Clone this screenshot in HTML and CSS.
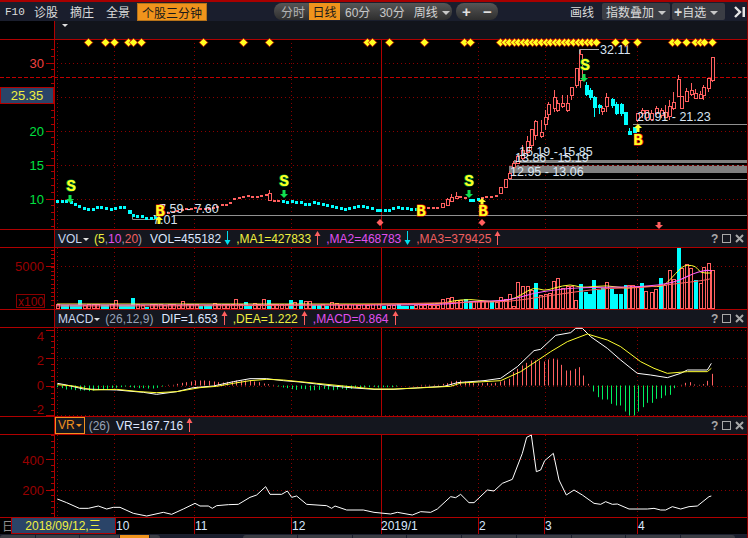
FILE: index.html
```html
<!DOCTYPE html>
<html>

<head>
    <meta charset="utf-8">
    <title>个股三分钟</title>
    <link rel="stylesheet" href="styles.css">
</head>

<body>
    <div class="app">
        <div class="topbar">
            <span class="nav-item f10">F10</span>
            <span class="nav-item">诊股</span>
            <span class="nav-item">摘庄</span>
            <span class="nav-item">全景</span>
            <span class="btn-orange">个股三分钟</span>
            <div class="pill periods">
                <span class="period">分时</span>
                <span class="period active">日线</span>
                <span class="period num">60分</span>
                <span class="period num">30分</span>
                <span class="period week">周线<i class="caret"></i></span>
            </div>
            <div class="pill zoom">
                <span>+</span>
                <span>−</span>
            </div>
            <span class="draw">画线</span>
            <span class="btn-grey index">指数叠加<i class="caret"></i></span>
            <span class="btn-grey fav"><b>+</b>自选<i class="caret"></i></span>
            <svg class="collapse" width="12" height="12" viewBox="0 0 12 12">
                <path d="M1 1 L6 6 L1 11" fill="none" stroke="#e4e4e4" stroke-width="2.4" />
                <rect x="8.5" y="1" width="2.5" height="10" fill="#e4e4e4" />
            </svg>
        </div>

        <div class="subbar">
            <div class="gutter"></div>
            <div class="subbar-body"><i class="caret light"></i></div>
        </div>

        <svg class="plot" id="mainChart" width="748" height="190" viewBox="0 39 748 190">
            <g id="mainBase"></g>
            <rect x="514" y="160" width="234" height="3" fill="#808080" />
            <rect x="509" y="165" width="239" height="8" fill="#808080" />
            <path d="M173 215.5H748 M509 179.5H748 M633 124.5H748 M132.5 215V219.5H155" fill="none" stroke="#909090" />
            <path d="M0 77.5H748" stroke="#c00000" stroke-dasharray="4 2" />
            <path d="M509 165.5H748" stroke="#700000" stroke-dasharray="3 2" />
            <g id="candles"></g>
            <path d="M579.5 54V49.5H599" fill="none" stroke="#b0b0b0" />
            <g class="range">
                <text x="600" y="54">32.11</text>
                <text x="637" y="121">20.91 - 21.23</text>
                <text x="519" y="156">15.19 - 15.85</text>
                <text x="515" y="162">13.86 - 15.19</text>
                <text x="510" y="176">12.95 - 13.06</text>
                <text x="159" y="213">7.59 - 7.60</text>
                <text x="153" y="224">7.01</text>
            </g>
            <g id="signals"></g>
            <g class="signal-s">
                <text x="71" y="191">S</text>
                <text x="284" y="186">S</text>
                <text x="469" y="186">S</text>
                <text x="585" y="70">S</text>
            </g>
            <g class="signal-b">
                <text x="160" y="216">B</text>
                <text x="421" y="216">B</text>
                <text x="483" y="216">B</text>
                <text x="638" y="145">B</text>
            </g>
            <g class="axis-text">
                <text class="up" x="44" y="68">30</text>
                <text class="down" x="44" y="136">20</text>
                <text class="down" x="44" y="170">15</text>
                <text class="down" x="44" y="204">10</text>
            </g>
            <rect class="price-box" x="0.5" y="87.5" width="53" height="16" />
            <text class="price-text" x="27" y="100">25.35</text>
        </svg>

        <div class="panel-head">
            <div class="gutter"></div>
            <div class="head-body">
                <span class="ind-name">VOL<i class="caret light"></i></span>
                <span class="params"><span class="c-yellow">(5</span>,<span class="c-magenta">10</span>,<span class="c-red">20</span>)</span>
                <span class="val">VOL=455182</span>
                <svg class="arrow" width="7" height="15"><path d="M3.5 0V10" stroke="#00e0f0" /><path d="M0.5 9H6.5L3.5 14Z" fill="#00e0f0" /></svg>
                <span class="c-yellow">,MA1=427833</span>
                <svg class="arrow" width="7" height="15"><path d="M3.5 14V4" stroke="#ff6060" /><path d="M0.5 5H6.5L3.5 0Z" fill="#ff6060" /></svg>
                <span class="c-magenta">,MA2=468783</span>
                <svg class="arrow" width="7" height="15"><path d="M3.5 0V10" stroke="#00e0f0" /><path d="M0.5 9H6.5L3.5 14Z" fill="#00e0f0" /></svg>
                <span class="c-red">,MA3=379425</span>
                <svg class="arrow" width="7" height="15"><path d="M3.5 14V4" stroke="#ff6060" /><path d="M0.5 5H6.5L3.5 0Z" fill="#ff6060" /></svg>
                <span class="win-btns"><b>?</b><i class="win-max"></i><svg width="9" height="9"><path d="M1 1L8 8M8 1L1 8" stroke="#a8a8a8" stroke-width="2" /></svg></span>
            </div>
        </div>

        <svg class="plot" id="volChart" width="748" height="61" viewBox="0 248 748 61">
            <g id="volBase"></g>
            <g id="volBars"></g>
            <g class="axis-text dim">
                <text x="44" y="271">5000</text>
            </g>
            <rect x="16.5" y="294.5" width="28" height="13" fill="#000" stroke="#8a0000" />
            <text class="unit" x="18" y="306">x100</text>
        </svg>

        <div class="panel-head">
            <div class="gutter"></div>
            <div class="head-body">
                <span class="ind-name">MACD<i class="caret light"></i></span>
                <span class="params">(26,12,9)</span>
                <span class="val">DIF=1.653</span>
                <svg class="arrow" width="7" height="15"><path d="M3.5 14V4" stroke="#ff6060" /><path d="M0.5 5H6.5L3.5 0Z" fill="#ff6060" /></svg>
                <span class="c-yellow">,DEA=1.222</span>
                <svg class="arrow" width="7" height="15"><path d="M3.5 14V4" stroke="#ff6060" /><path d="M0.5 5H6.5L3.5 0Z" fill="#ff6060" /></svg>
                <span class="c-magenta">,MACD=0.864</span>
                <svg class="arrow" width="7" height="15"><path d="M3.5 14V4" stroke="#ff6060" /><path d="M0.5 5H6.5L3.5 0Z" fill="#ff6060" /></svg>
                <span class="win-btns"><b>?</b><i class="win-max"></i><svg width="9" height="9"><path d="M1 1L8 8M8 1L1 8" stroke="#a8a8a8" stroke-width="2" /></svg></span>
            </div>
        </div>

        <svg class="plot" id="macdChart" width="748" height="88" viewBox="0 328 748 88">
            <g id="macdBase"></g>
            <g id="macdLines"></g>
            <g class="axis-text dim">
                <text x="44" y="341">4</text>
                <text x="44" y="365">2</text>
                <text x="44" y="390">0</text>
                <text x="44" y="414">-2</text>
            </g>
        </svg>

        <div class="panel-head">
            <div class="gutter"></div>
            <div class="head-body vr">
                <span class="ind-name selected">VR<i class="caret orange"></i></span>
                <span class="params">(26)</span>
                <span class="val">VR=167.716</span>
                <svg class="arrow" width="7" height="15"><path d="M3.5 14V4" stroke="#ff6060" /><path d="M0.5 5H6.5L3.5 0Z" fill="#ff6060" /></svg>
                <span class="win-btns"><b>?</b><i class="win-max"></i><svg width="9" height="9"><path d="M1 1L8 8M8 1L1 8" stroke="#a8a8a8" stroke-width="2" /></svg></span>
            </div>
        </div>

        <svg class="plot" id="vrChart" width="748" height="82" viewBox="0 435 748 82">
            <g id="vrBase"></g>
            <g id="vrLine"></g>
            <g class="axis-text dim">
                <text x="44" y="465">400</text>
                <text x="44" y="495">200</text>
            </g>
        </svg>

        <svg class="plot" id="timeAxis" width="748" height="17" viewBox="0 517 748 17">
            <path d="M0 517.5H748 M115.5 517V534 M194.5 517V534 M291.5 517V534 M381.5 517V534 M478.5 517V534 M544.5 517V534 M637.5 517V534" stroke="#b00000" />
            <g class="time-text">
                <text x="2" y="531" class="muted">日</text>
                <text x="116" y="530">10</text>
                <text x="195" y="530">11</text>
                <text x="292" y="530">12</text>
                <text x="381" y="530">2019/1</text>
                <text x="479" y="530">2</text>
                <text x="545" y="530">3</text>
                <text x="638" y="530">4</text>
            </g>
            <rect class="price-box" x="11.5" y="517.5" width="104" height="16" />
            <text class="price-text date" x="63" y="530">2018/09/12,三</text>
        </svg>

        <div class="bottom-strip">
            <div class="tabs left">
                <span class="tab w35"></span>
                <span class="tab w43"></span>
                <span class="tab w39"></span>
                <span class="tab w29 on"></span>
                <span class="tab"></span>
            </div>
            <div class="tabs right">
                <span class="tab"></span>
                <span class="tab"></span>
                <span class="tab"></span>
                <span class="tab"></span>
                <span class="tab"></span>
                <span class="tab"></span>
                <span class="tab"></span>
                <span class="tab"></span>
                <span class="tab"></span>
            </div>
        </div>
    </div>
    <script src="script.js"></script>
</body>

</html>
```

FILE: styles.css
```css
* {
    box-sizing: border-box;
}

html,
body {
    margin: 0;
    padding: 0;
    background-color: #000;
}

body {
    font-family: "Liberation Sans", "Noto Sans CJK SC", sans-serif;
    font-size: 12px;
}

.app {
    width: 748px;
    height: 538px;
    overflow: hidden;
    background-color: #000;
    border-right: 1px solid #900000;
}

.plot {
    display: block;
    overflow: visible;
}

.gutter {
    width: 54px;
    flex: none;
    background-color: #000;
}

/* top toolbar */
.topbar {
    height: 21px;
    display: flex;
    align-items: center;
    border-top: 2px solid #a80000;
    background-color: #1a1e2d;
    color: #dcdcdc;
    font-family: "Noto Sans CJK SC", sans-serif;
    font-size: 12px;
    padding-left: 5px;
}

.nav-item {
    margin-right: 13px;
    width: 23px;
    white-space: nowrap;
}

.nav-item.f10 {
    width: 16px;
    font-family: "Liberation Mono", monospace;
    font-size: 11px;
}

.btn-orange {
    width: 70px;
    height: 18px;
    margin-left: -5px;
    line-height: 17px;
    text-align: center;
    background-color: #f0941c;
    border: 1px solid #b5721a;
    color: #1a1a1a;
}

.pill {
    height: 17px;
    display: flex;
    align-items: center;
    border-radius: 8px;
    background: linear-gradient(#565656, #2e2e2e);
}

.periods {
    width: 178px;
    margin-left: 67px;
    padding-left: 7px;
    overflow: hidden;
    color: #b4b4b4;
}

.period {
    white-space: nowrap;
}

.period.active {
    width: 31px;
    height: 17px;
    margin-left: 4px;
    line-height: 17px;
    text-align: center;
    background-color: #f0941c;
    color: #1a1a1a;
}

.period.num {
    font-family: "Liberation Sans", "Noto Sans CJK SC", sans-serif;
    margin-left: 5px;
    margin-right: 4px;
    color: #c8c8c8;
}

.period.week {
    margin-left: 5px;
    color: #d4d4d4;
}

.caret {
    display: inline-block;
    width: 0;
    height: 0;
    margin-left: 4px;
    vertical-align: 2px;
    border-left: 4px solid transparent;
    border-right: 4px solid transparent;
    border-top: 4px solid #c8c8c8;
}

.caret.light {
    border-top-color: #e0e0e0;
    border-left-width: 3px;
    border-right-width: 3px;
    border-top-width: 3px;
}

.caret.orange {
    border-top-color: #f09020;
    border-left-width: 3px;
    border-right-width: 3px;
    border-top-width: 3px;
}

.zoom {
    width: 42px;
    margin-left: 4px;
    justify-content: space-around;
    color: #e0e0e0;
    font-family: "Liberation Sans", sans-serif;
    font-size: 15px;
    font-weight: bold;
}

.draw {
    margin-left: 72px;
    width: 32px;
}

.btn-grey {
    height: 17px;
    line-height: 17px;
    background-color: #3b3d44;
    white-space: nowrap;
    border-radius: 2px;
}

.btn-grey.index {
    width: 68px;
    padding-left: 4px;
}

.btn-grey.fav {
    width: 53px;
    margin-left: 2px;
    padding-left: 2px;
}

.btn-grey.fav b {
    font-family: "Liberation Sans", sans-serif;
    font-size: 14px;
}

.collapse {
    margin-left: 9px;
}

/* strip under the toolbar */
.subbar {
    height: 18px;
    display: flex;
}

.subbar-body {
    flex: 1;
    background-color: #12141b;
    border-left: 1px solid #b00000;
    padding-left: 3px;
    line-height: 9px;
}

/* indicator headers */
.panel-head {
    height: 19px;
    display: flex;
    border-top: 1px solid #b00000;
    border-bottom: 1px solid #b00000;
}

.head-body {
    flex: 1;
    display: flex;
    align-items: center;
    padding-left: 3px;
    border-left: 1px solid #b00000;
    background-color: #14161e;
    color: #dfe8ff;
    white-space: nowrap;
}

.head-body.vr {
    padding-left: 0;
}

.ind-name {
    color: #c8d8f0;
    margin-right: 5px;
}

.ind-name .caret {
    margin-left: 1px;
}

.ind-name.selected {
    height: 17px;
    line-height: 15px;
    padding: 0 2px 0 2px;
    margin-right: 4px;
    border: 1px solid #f09020;
    color: #f09020;
}

.params {
    color: #98a4b8;
    margin-right: 8px;
}

.vr .params {
    margin-right: 6px;
}

.arrow {
    margin: 0 5px 0 3px;
    flex: none;
}

.c-yellow {
    color: #f0f040;
}

.c-magenta {
    color: #e050f0;
}

.c-red {
    color: #f06060;
}

.win-btns {
    margin-left: auto;
    margin-right: 3px;
    display: flex;
    align-items: center;
    gap: 4px;
}

.win-btns b {
    color: #a8a8a8;
    font-size: 12px;
    width: 7px;
}

.win-max {
    display: block;
    width: 9px;
    height: 9px;
    border: 1px solid #a8a8a8;
}

/* svg text */
.axis-text text {
    font-size: 13px;
    text-anchor: end;
}

.axis-text .up {
    fill: #f04040;
}

.axis-text .down {
    fill: #00e040;
}

.axis-text.dim text {
    fill: #980000;
}

.unit {
    font-size: 12px;
    fill: #980000;
}

.range text {
    font-size: 12.5px;
    fill: #d8e4f0;
}

.signal-s text,
.signal-b text {
    font-family: "Liberation Mono", monospace;
    font-size: 16px;
    font-weight: bold;
    text-anchor: middle;
    fill: #ffff20;
    stroke-width: 1.2px;
    paint-order: stroke;
}

.signal-s text {
    stroke: #009a3c;
}

.signal-b text {
    stroke: #f01010;
}

.price-box {
    fill: #2a4468;
    stroke: #b00000;
}

.price-text {
    font-size: 13px;
    fill: #f0f040;
    text-anchor: middle;
}

.price-text.date {
    font-family: "Liberation Sans", "Noto Sans CJK SC", sans-serif;
    font-size: 12px;
}

.time-text text {
    font-size: 12px;
    fill: #d8e8ff;
}

.time-text .muted {
    font-family: "Noto Sans CJK SC", sans-serif;
    fill: #909090;
}

/* tabs at the window bottom */
.bottom-strip {
    height: 4px;
    display: flex;
    background-color: #1a1e2d;
    padding-top: 1px;
}

.tabs {
    display: flex;
    border-radius: 3px 3px 0 0;
    overflow: hidden;
    gap: 1px;
}

.tabs.left {
    width: 160px;
}

.tabs.right {
    width: 492px;
    margin-left: 83px;
}

.tab {
    flex: 1;
    background-color: #3b3d44;
}

.tab.w35 {
    flex: none;
    width: 35px;
}

.tab.w43 {
    flex: none;
    width: 43px;
}

.tab.w39 {
    flex: none;
    width: 39px;
}

.tab.w29 {
    flex: none;
    width: 29px;
}

.tab.on {
    background-color: #f0941c;
}
```

FILE: script.js
```js
var RED = "#ff6060";
var CYAN = "#00ffff";
var GRID = "#8a0000";
var LINE = "#b00000";
var gridX = [57, 114, 194, 291, 478, 545, 637];

function el(id) {
    return document.getElementById(id);
}

// draws gutter line, dotted grid and axis ticks for one panel
function base(id, top, bottom, rows, major, first, step) {
    var s = "";
    var i;
    for (i = 0; i < gridX.length; i++) {
        s += '<path d="M' + (gridX[i] + 0.5) + ' ' + top + 'V' + bottom + '" stroke="' + GRID + '" stroke-dasharray="1 3"/>';
    }
    for (i = 0; i < rows.length; i++) {
        s += '<path d="M57 ' + (rows[i] + 0.5) + 'H748" stroke="' + GRID + '" stroke-dasharray="1 3"/>';
    }
    s += '<path d="M381.5 ' + top + 'V' + bottom + '" stroke="' + LINE + '"/>';
    s += '<path d="M54.5 ' + top + 'V' + bottom + '" stroke="' + LINE + '"/>';
    for (var y = first; y < bottom; y += step) {
        var ty = Math.round(y) + 0.5;
        s += '<path d="M51 ' + ty + 'H54" stroke="' + LINE + '"/>';
    }
    for (i = 0; i < major.length; i++) {
        s += '<path d="M46 ' + (major[i] + 0.5) + 'H54" stroke="' + LINE + '"/>';
    }
    el(id).innerHTML = s;
}

function polyline(points, color, width) {
    var s = "";
    for (var i = 0; i < points.length; i++) {
        s += points[i][0] + "," + points[i][1] + " ";
    }
    return '<polyline points="' + s + '" fill="none" stroke="' + color + '" stroke-width="' + (width || 1) + '"/>';
}

// same points but rounded off through the midpoints
function curve(points, color, width) {
    var d = "M" + points[0][0] + " " + points[0][1];
    for (var i = 1; i < points.length - 1; i++) {
        var mx = (points[i][0] + points[i + 1][0]) / 2;
        var my = (points[i][1] + points[i + 1][1]) / 2;
        d += "Q" + points[i][0] + " " + points[i][1] + " " + mx + " " + my;
    }
    var last = points[points.length - 1];
    d += "L" + last[0] + " " + last[1];
    return '<path d="' + d + '" fill="none" stroke="' + color + '" stroke-width="' + (width || 1) + '"/>';
}

// turns zoomed-crop style values into page pixels
function fromCrop(list, x0, y0) {
    var out = [];
    for (var i = 0; i < list.length; i += 2) {
        out.push([x0 + list[i] / 3, y0 + list[i + 1] / 3]);
    }
    return out;
}

base("mainBase", 39, 229, [63, 97, 131, 165, 199], [63, 131, 165, 199], 49, 6.8);
el("mainBase").innerHTML += '<path d="M0 39.5H748" stroke="' + LINE + '"/>';
base("volBase", 248, 309, [266], [266], 250, 4.2);
base("macdBase", 328, 416, [330, 358, 386, 415], [330, 358, 386, 415], 330, 5.7);
base("vrBase", 435, 517, [459, 490], [459, 490], 435, 6);

// small candles: x, centre y, direction
var small = [
    [57, 201, 0], [62, 201, 0], [66, 201, 0], [71, 202, 0], [75, 204, 0], [79, 206, 0], [84, 208, 0], [88, 209, 0],
    [93, 209, 0], [97, 207, 0], [101, 207, 0], [106, 208, 0], [111, 209, 0], [115, 208, 0], [120, 207, 0], [124, 207, 0],
    [133, 215, 0], [137, 216, 0], [142, 216, 0], [146, 218, 0], [151, 218, 0], [155, 217, 0],
    [163, 212, 1], [168, 212, 1], [173, 211, 1], [177, 210, 1], [182, 209, 1], [186, 208, 1], [191, 208, 1], [195, 207, 1],
    [200, 208, 1], [205, 208, 1], [209, 208, 1], [213, 207, 1], [217, 206, 1], [222, 204, 1], [226, 204, 1], [230, 202, 1],
    [234, 198, 1], [239, 197, 1], [243, 196, 1], [248, 195, 1], [252, 196, 1], [257, 196, 1], [261, 195, 1], [266, 194, 1],
    [274, 200, 1], [278, 200, 1],
    [283, 201, 0], [287, 202, 0], [292, 201, 0], [296, 202, 0], [301, 202, 0], [305, 204, 0], [309, 204, 0], [314, 202, 0],
    [318, 203, 0], [323, 204, 0], [327, 205, 0], [332, 206, 0], [336, 207, 0], [341, 208, 0], [345, 209, 0], [349, 208, 0],
    [354, 207, 0], [358, 206, 0], [363, 206, 0], [367, 207, 0], [372, 208, 0],
    [377, 210, 0], [380, 210, 0], [385, 210, 0], [389, 210, 0], [393, 208, 0], [398, 207, 0], [402, 208, 0], [407, 208, 0],
    [411, 209, 0], [416, 209, 0],
    [419, 209, 1], [428, 207, 1], [433, 207, 1], [437, 207, 1], [460, 196, 1], [465, 197, 1],
    [470, 200, 0], [473, 200, 0], [478, 199, 0],
    [482, 197, 1], [486, 196, 1], [491, 196, 1], [496, 195, 1]
];

// bigger candles: x, body top, body bottom, wick top, wick bottom, direction
var big = [
    [128, 210, 214, 210, 214, 0],
    [269, 193, 200, 190, 200, 1],
    [442, 203, 207, 203, 207, 1],
    [447, 199, 205, 198, 206, 1],
    [451, 197, 201, 194, 202, 1],
    [456, 196, 198, 192, 199, 1],
    [500, 187, 193, 187, 193, 1],
    [505, 179, 187, 179, 187, 1],
    [509, 173, 178, 171, 178, 1],
    [513, 163, 167, 161, 169, 1],
    [517, 156, 163, 154, 164, 1],
    [522, 150, 158, 145, 160, 1],
    [527, 141, 152, 136, 156, 1],
    [531, 129, 145, 129, 150, 1],
    [535, 121, 135, 120, 140, 1],
    [541, 132, 136, 120, 138, 1],
    [545, 117, 124, 110, 130, 1],
    [548, 104, 114, 102, 120, 1],
    [554, 97, 108, 90, 112, 1],
    [557, 103, 110, 100, 112, 1],
    [562, 103, 106, 95, 108, 1],
    [567, 103, 110, 95, 112, 1],
    [571, 87, 95, 87, 100, 1],
    [576, 68, 85, 68, 88, 1],
    [580, 54, 80, 49, 88, 1],
    [585, 85, 95, 82, 96, 0],
    [589, 90, 98, 88, 100, 0],
    [593, 97, 108, 96, 117, 0],
    [598, 105, 108, 104, 114, 0],
    [602, 108, 111, 106, 115, 1],
    [606, 97, 106, 93, 112, 1],
    [611, 99, 106, 98, 108, 0],
    [615, 104, 114, 102, 115, 0],
    [620, 104, 114, 103, 116, 0],
    [624, 112, 125, 112, 125, 0],
    [628, 131, 135, 128, 135, 0],
    [633, 127, 133, 127, 133, 0],
    [637, 113, 120, 113, 122, 1],
    [642, 110, 113, 108, 118, 1],
    [646, 110, 117, 110, 121, 1],
    [651, 113, 119, 110, 121, 1],
    [656, 108, 113, 106, 115, 1],
    [661, 110, 115, 108, 118, 1],
    [665, 112, 117, 105, 118, 1],
    [669, 106, 116, 100, 120, 1],
    [673, 102, 108, 92, 110, 1],
    [678, 79, 96, 75, 97, 1],
    [681, 96, 108, 96, 108, 1],
    [686, 91, 101, 88, 102, 1],
    [691, 90, 94, 83, 96, 1],
    [695, 93, 98, 89, 99, 1],
    [700, 94, 98, 91, 99, 1],
    [703, 87, 95, 85, 100, 1],
    [708, 78, 88, 78, 92, 1],
    [712, 57, 80, 57, 82, 1]
];

var c = "";
var i;
for (i = 0; i < small.length; i++) {
    if (small[i][2]) {
        c += '<rect x="' + (small[i][0] - 1) + '" y="' + small[i][1] + '" width="3" height="2" fill="' + RED + '"/>';
    } else {
        c += '<rect x="' + (small[i][0] - 1) + '" y="' + (small[i][1] - 1) + '" width="3" height="3" fill="' + CYAN + '"/>';
    }
}
for (i = 0; i < big.length; i++) {
    var b = big[i];
    var color = b[5] ? RED : CYAN;
    if (b[5]) {
        c += '<path d="M' + (b[0] + 0.5) + ' ' + b[3] + 'V' + b[4] + '" stroke="' + color + '"/>';
        c += '<rect x="' + (b[0] - 0.5) + '" y="' + (b[1] + 0.5) + '" width="3" height="' + (b[2] - b[1]) + '" fill="#000" stroke="' + color + '"/>';
    } else {
        c += '<path d="M' + (b[0] + 1.5) + ' ' + b[3] + 'V' + b[4] + '" stroke="' + color + '"/>';
        c += '<rect x="' + b[0] + '" y="' + b[1] + '" width="4" height="' + (b[2] - b[1]) + '" fill="' + color + '"/>';
    }
}
el("candles").innerHTML = c;

// signals along the top edge and the markers
var topMarks = [88, 105, 114, 128, 133, 141, 203, 243, 269, 367, 372, 389, 424, 464, 470, 615, 625, 637, 672, 677, 686, 695, 700, 704, 712];
for (i = 0; i < 22; i++) {
    topMarks.push(500 + i * 4.56);
}
var sig = "";
for (i = 0; i < topMarks.length; i++) {
    var mx = Math.round(topMarks[i]) + 0.5;
    sig += '<path d="M' + mx + ' 38.2L' + (mx + 4.3) + ' 42.5L' + mx + ' 46.8L' + (mx - 4.3) + ' 42.5Z" fill="#ffff20" stroke="#c00000" stroke-width="0.8"/>';
}

function arrowDown(x, y) {
    return '<path d="M' + (x - 1.5) + ' ' + (y - 4) + 'H' + (x + 1.5) + 'V' + y + 'H' + (x + 4) + 'L' + x + ' ' + (y + 4) + 'L' + (x - 4) + ' ' + y + 'H' + (x - 1.5) + 'Z" fill="#10e050"/>';
}

function arrowUp(x, y) {
    return '<path d="M' + (x - 1.5) + ' ' + (y + 4) + 'H' + (x + 1.5) + 'V' + y + 'H' + (x + 4) + 'L' + x + ' ' + (y - 4) + 'L' + (x - 4) + ' ' + y + 'H' + (x - 1.5) + 'Z" fill="#ffff30"/>';
}

sig += arrowDown(70, 199) + arrowDown(284, 194) + arrowDown(469, 194) + arrowDown(584, 78);
sig += arrowUp(159, 220) + arrowUp(482, 202) + arrowUp(638, 128);
sig += '<path d="M380 219L383.5 222.5L380 226L376.5 222.5Z M482 219L485.5 222.5L482 226L478.5 222.5Z" fill="' + RED + '"/>';
sig += '<path d="M657.5 222H660.5V225H663L659 229L655 225H657.5Z" fill="' + RED + '"/>';
el("signals").innerHTML = sig;

// volume bars: left part is low and even, right part read off the crop
var lowVol = [
    [57, 4, 1], [62, 4, 0], [66, 4, 0], [71, 4, 0], [75, 4, 0], [79, 9, 0], [84, 3, 1], [88, 4, 1], [93, 4, 1], [97, 4, 1],
    [102, 4, 0], [106, 4, 0], [111, 4, 1], [115, 8, 1], [120, 4, 0], [124, 4, 0], [128, 4, 0], [132, 11, 0], [137, 4, 1],
    [142, 3, 1], [146, 2, 0], [151, 4, 1], [155, 4, 1], [160, 4, 1], [164, 3, 1], [169, 4, 1], [173, 4, 1], [178, 3, 1],
    [182, 7, 1], [187, 4, 1], [191, 4, 1], [196, 4, 1], [200, 3, 0], [205, 4, 0], [209, 4, 0], [214, 5, 1], [218, 4, 1],
    [223, 4, 1], [227, 4, 1], [232, 4, 1], [235, 9, 1], [240, 4, 1], [245, 7, 0], [249, 3, 0], [254, 5, 1], [258, 4, 1],
    [263, 9, 1], [268, 9, 0], [272, 4, 1], [276, 4, 1], [281, 4, 1], [286, 4, 1], [290, 9, 0], [294, 6, 1], [300, 9, 0],
    [305, 7, 1], [309, 7, 1], [313, 4, 0], [318, 4, 0], [322, 4, 1], [326, 3, 0], [331, 6, 1], [336, 5, 1], [340, 3, 1],
    [345, 4, 1], [349, 4, 1], [354, 4, 1], [358, 3, 1], [363, 4, 1], [367, 3, 1], [372, 4, 1], [378, 4, 1], [383, 3, 0],
    [388, 3, 1], [393, 3, 1], [398, 5, 0], [402, 3, 0], [406, 3, 0], [411, 3, 0], [415, 3, 1], [420, 3, 1], [424, 3, 1],
    [429, 3, 1], [433, 3, 1], [437, 3, 1]
];
var highVol = [
    [442, 9, 1], [447, 10, 1], [451, 11, 1], [456, 8, 1], [460, 8, 1], [465, 10, 0], [470, 8, 0], [473, 7, 1], [478, 7, 1],
    [482, 7, 1], [486, 7, 1], [491, 8, 0], [496, 6, 1], [500, 11, 1], [505, 9, 1], [509, 14, 1], [513, 2, 1], [517, 26, 1],
    [522, 22, 1], [527, 22, 1], [531, 18, 1], [535, 26, 0], [540, 13, 1], [545, 14, 1], [549, 15, 1], [553, 27, 1], [557, 30, 1],
    [562, 20, 1], [567, 22, 1], [571, 22, 1], [575, 8, 1], [580, 25, 0], [585, 17, 0], [589, 15, 0], [593, 29, 0], [598, 19, 0],
    [602, 21, 0], [606, 26, 1], [611, 20, 0], [615, 15, 0], [620, 15, 0], [625, 24, 0], [628, 23, 1], [632, 23, 1], [637, 21, 1],
    [641, 26, 0], [645, 17, 1], [651, 16, 1], [655, 19, 1], [660, 31, 0], [664, 23, 1], [669, 38, 1], [673, 29, 1], [678, 61, 0],
    [681, 40, 1], [686, 44, 1], [690, 40, 1], [695, 29, 0], [700, 25, 1], [703, 41, 1], [708, 45, 1], [712, 38, 1]
];
var all = lowVol.concat(highVol);
var v = "";
for (i = 0; i < all.length; i++) {
    var h = all[i][1];
    if (all[i][2]) {
        v += '<rect x="' + (all[i][0] - 0.5) + '" y="' + (308.5 - h) + '" width="3" height="' + h + '" fill="#000" stroke="' + RED + '"/>';
    } else {
        v += '<rect x="' + (all[i][0] - 1) + '" y="' + (309 - h) + '" width="4" height="' + h + '" fill="' + CYAN + '"/>';
    }
}
v += curve([[57, 304], [180, 304], [300, 304], [374, 304], [442, 304], [451, 301], [471, 299], [491, 302], [511, 300], [521, 295], [534, 287], [544, 291], [554, 288], [571, 284], [581, 288], [607, 285], [627, 289], [644, 286], [661, 287], [667, 283], [676, 273], [682, 267], [687, 265], [696, 266], [700, 273], [711, 273]], "#ffff30");
v += curve([[57, 305], [300, 305], [441, 305], [474, 301], [507, 301], [534, 293], [554, 290], [574, 288], [607, 287], [641, 287], [674, 283], [694, 273], [707, 270], [712, 271]], "#ff60ff", 1.2);
v += curve([[57, 306], [300, 306], [474, 302], [507, 302], [541, 297], [574, 292], [607, 288], [641, 288], [674, 284], [707, 280], [712, 278]], "#ff6060");
el("volBars").innerHTML = v;

// macd histogram
var zero = 385.5;
var m = "";
function hist(values, x0, step, color, sign) {
    var s = "";
    for (var k = 0; k < values.length; k++) {
        var x = Math.round(x0 + k * step) + 0.5;
        s += '<path d="M' + x + ' ' + zero + 'V' + (zero + sign * values[k] / 3) + '" stroke="' + color + '"/>';
    }
    return s;
}
m += hist([5, 8, 12, 12, 14, 15, 15, 17, 15, 13, 11, 10, 8, 7, 5, 3, 5, 7, 8, 8, 9, 9, 7, 3], 57, 4.55, "#00f060", 1);
m += hist([2, 2, 5, 8, 10, 12, 15, 15, 15, 14, 12, 10, 9, 11, 12, 15, 15, 15, 15, 12, 10, 6, 4, 2], 168, 4.55, RED, -1);
m += hist([3, 6, 8, 11, 13, 10, 11, 15, 14, 13, 10, 12, 14, 12, 10, 13, 10, 7, 8, 6, 5, 4, 6, 5, 5, 5, 3], 278, 4.55, "#00f060", 1);
m += hist([2, 2, 2, 2, 2, 5, 7, 12, 14, 15, 12, 10, 7, 6, 7, 8, 6, 8, 12, 15, 20, 40, 50, 60, 68, 75, 75, 75, 72, 78, 80, 78, 62, 45, 45, 50, 55, 30, 5], 420.5, 4.4, RED, -1);
m += hist([18, 35, 42, 42, 55, 60, 60, 78, 90, 90, 78, 65, 52, 52, 40, 38, 30, 28, 8], 593, 4.5, "#00f060", 1);
m += hist([2, 8, 10, 3, 2, 4, 14, 35], 681, 4.4, RED, -1);
var dif = fromCrop([172, 220, 200, 225, 250, 237, 350, 240, 430, 247, 470, 253, 530, 245, 580, 233, 640, 228, 700, 215, 750, 206, 800, 206, 850, 212, 900, 216, 950, 222, 1000, 228, 1050, 233, 1122, 238], 0, 310)
    .concat(fromCrop([60, 238, 140, 233, 210, 229, 250, 218, 330, 212, 380, 205, 430, 170, 480, 122, 500, 118, 545, 76, 590, 68, 605, 55, 625, 55, 650, 80, 700, 115, 740, 150, 790, 190, 830, 195, 880, 203, 920, 190, 940, 180, 1000, 180, 1012, 160], 374, 310));
var dea = fromCrop([172, 224, 220, 228, 280, 240, 350, 238, 420, 245, 470, 248, 530, 245, 600, 233, 650, 229, 700, 220, 750, 212, 800, 208, 850, 210, 950, 220, 1050, 230, 1122, 237], 0, 310)
    .concat(fromCrop([60, 237, 130, 234, 230, 229, 260, 219, 330, 215, 380, 212, 440, 185, 530, 125, 580, 95, 640, 72, 700, 90, 740, 110, 800, 155, 840, 175, 880, 190, 940, 185, 1000, 185, 1012, 175], 374, 310));
m += polyline(dif, "#ffffff");
m += polyline(dea, "#ffff30");
el("macdLines").innerHTML = m;

// vr line
var vr = fromCrop([172, 267, 200, 278, 238, 295, 265, 295, 295, 288, 320, 297, 340, 292, 360, 292, 400, 310, 440, 318, 490, 307, 515, 313, 550, 297, 585, 280, 600, 288, 625, 288, 637, 295, 650, 287, 685, 284, 715, 283, 750, 262, 770, 255, 797, 230, 810, 253, 845, 253, 862, 243, 875, 262, 890, 258, 920, 283, 980, 287, 995, 295, 1005, 288, 1040, 300, 1090, 300, 1122, 307], 0, 410)
    .concat(fromCrop([50, 312, 70, 307, 115, 315, 140, 305, 170, 307, 190, 297, 230, 260, 245, 263, 260, 253, 285, 278, 300, 278, 340, 240, 360, 243, 385, 220, 415, 208, 445, 130, 458, 82, 472, 75, 487, 185, 500, 180, 512, 152, 538, 130, 555, 210, 577, 255, 600, 240, 625, 255, 660, 280, 680, 283, 695, 275, 715, 283, 730, 282, 765, 297, 820, 297, 840, 295, 860, 300, 875, 300, 895, 290, 920, 297, 945, 290, 970, 288, 1005, 260, 1012, 258], 374, 410));
el("vrLine").innerHTML = polyline(vr, "#ffffff");
```
